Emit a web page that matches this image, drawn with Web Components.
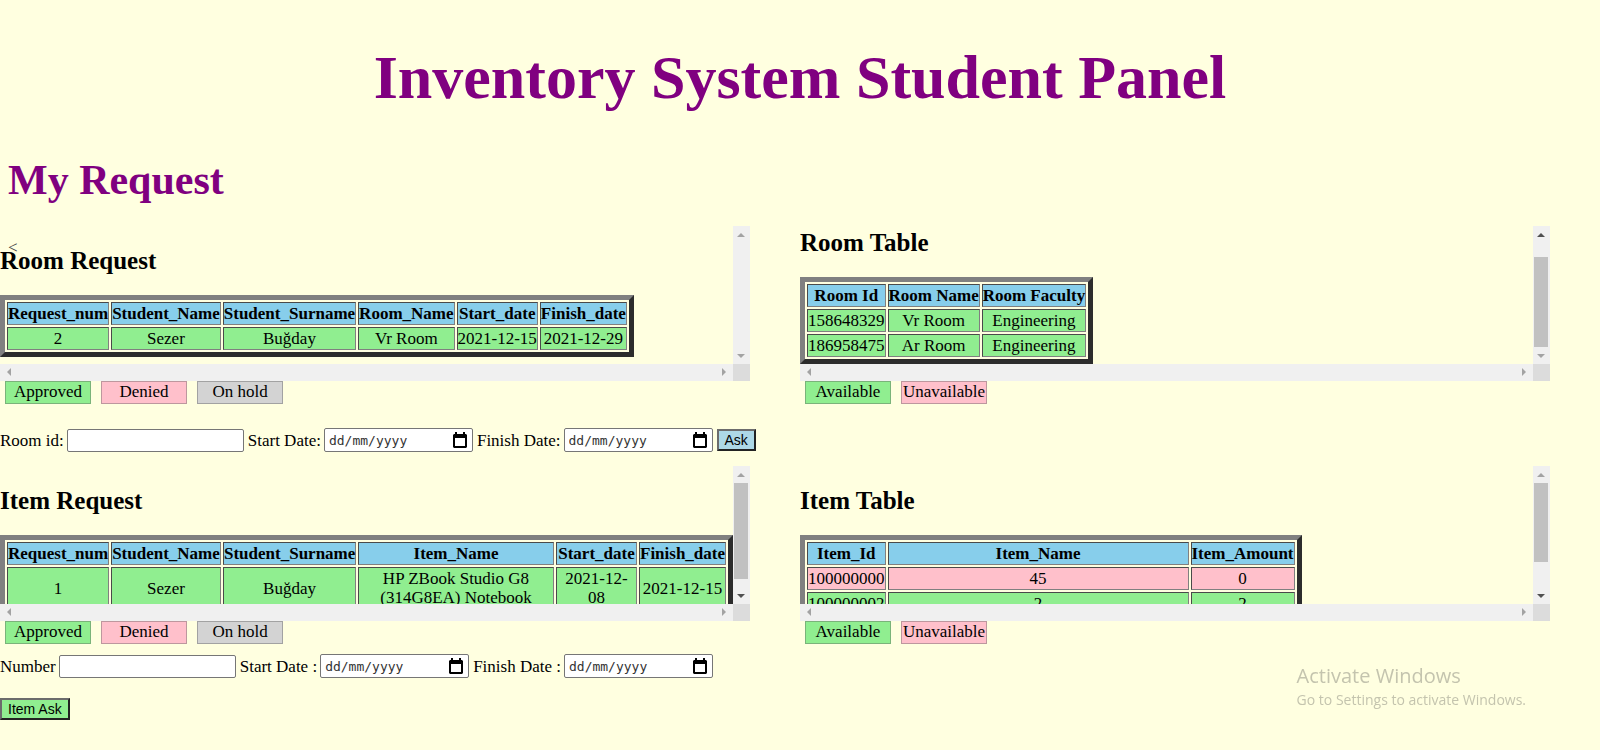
<!DOCTYPE html>
<html lang="en">
<head>
<meta charset="utf-8">
<title>Inventory System Student Panel</title>
<style>
  body {
    margin: 0;
    background: #ffffe0;
    color: #000;
    font-family: "Liberation Serif", "Times New Roman", serif;
    font-size: 17px;
    line-height: 19px;
  }
</style>
</head>
<body>
<student-panel></student-panel>

<script>
const TABLES = {
  roomRequests: {
    columns: ["Request_num", "Student_Name", "Student_Surname", "Room_Name", "Start_date", "Finish_date"],
    rows: [["ok", "2", "Sezer", "Buğday", "Vr Room", "2021-12-15", "2021-12-29"]]
  },
  rooms: {
    columns: ["Room Id", "Room Name", "Room Faculty"],
    rows: [
      ["ok", "158648329", "Vr Room", "Engineering"],
      ["ok", "186958475", "Ar Room", "Engineering"]
    ]
  },
  itemRequests: {
    fill: true,
    columns: ["Request_num", "Student_Name", "Student_Surname", "Item_Name", "Start_date", "Finish_date"],
    widths: [102, 110, 133, 0, 81, 87],
    rows: [["ok", "1", "Sezer", "Buğday", "HP ZBook Studio G8 (314G8EA) Notebook", "2021-12-<br>08", "2021-12-15"]]
  },
  items: {
    columns: ["Item_Id", "Item_Name", "Item_Amount"],
    widths: [0, 301, 0],
    rows: [
      ["no", "100000000", "45", "0"],
      ["ok", "100000002", "2", "2"]
    ]
  }
};

class DataTable extends HTMLElement {
  connectedCallback() {
    const t = TABLES[this.getAttribute("source")];
    const cols = (t.widths || []).map(w => w ? `<col style="width:${w}px">` : "<col>").join("");
    const head = t.columns.map(c => `<th scope="col">${c}</th>`).join("");
    const body = t.rows.map(([state, ...cells]) =>
      `<tr class="${state}">${cells.map(c => `<td>${c}</td>`).join("")}</tr>`).join("");
    this.attachShadow({ mode: "open" }).innerHTML = `
      <style>
        :host { display: block; }
        table {
          border: 5px solid;
          border-color: #808080 #2c2c2c #2c2c2c #808080;
          border-spacing: 2px;
          text-align: center;
        }
        table.fill { width: 100%; table-layout: fixed; }
        th, td {
          box-sizing: border-box;
          border: 1px solid;
          border-color: #4a4a4a #808080 #808080 #4a4a4a;
          padding: 1px 0;
        }
        th { background: skyblue; }
        .ok { background: lightgreen; }
        .no { background: pink; }
      </style>
      <table class="${t.fill ? "fill" : ""}">
        <colgroup>${cols}</colgroup>
        <thead><tr>${head}</tr></thead>
        <tbody>${body}</tbody>
      </table>`;
  }
}
customElements.define("data-table", DataTable);

class ScrollPanel extends HTMLElement {
  connectedCallback() {
    const on = "#505050", off = "#a3a3a3";
    const up = this.hasAttribute("can-up") ? on : off;
    const down = this.hasAttribute("can-down") ? on : off;
    const thumb = this.getAttribute("thumb");
    const arrow = (d, fill) => `<svg width="17" height="17" viewBox="0 0 17 17"><path d="${d}" fill="${fill}"/></svg>`;
    this.attachShadow({ mode: "open" }).innerHTML = `
      <style>
        :host {
          display: grid;
          grid-template-columns: minmax(0, 1fr) 17px;
          grid-template-rows: 138px 17px;
        }
        .view { overflow: hidden; }
        h2 { margin: 21px 0 20px; font-size: 25px; line-height: 28px; }
        svg { display: block; flex: none; }
        .v, .h { display: flex; background: #f0f0f0; }
        .v { flex-direction: column; }
        .h { justify-content: space-between; }
        .track { flex: 1; display: flex; flex-direction: column; padding: 0 2px 0 1px; }
        .track.end { justify-content: flex-end; }
        .thumb { background: #c1c1c1; }
        .corner { background: #dcdcdc; }
      </style>
      <div class="view"><h2>${this.getAttribute("heading")}</h2><slot></slot></div>
      <div class="v" aria-hidden="true">
        ${arrow("M4 11 8 7 12 11Z", up)}
        <div class="track ${this.hasAttribute("can-up") ? "end" : ""}">
          ${thumb ? `<div class="thumb" style="height:${thumb}%"></div>` : ""}
        </div>
        ${arrow("M4 7 8 11 12 7Z", down)}
      </div>
      <div class="h" aria-hidden="true">
        ${arrow("M11 4 7 8 11 12Z", off)}
        ${arrow("M6 4 10 8 6 12Z", off)}
      </div>
      <div class="corner"></div>`;
    if (this.hasAttribute("can-up")) {
      requestAnimationFrame(() => this.toEnd());
      this.toEnd();
    }
  }
  toEnd() {
    const view = this.shadowRoot.querySelector(".view");
    view.scrollTop = view.scrollHeight;
  }
}
customElements.define("scroll-panel", ScrollPanel);

class StatusLegend extends HTMLElement {
  connectedCallback() {
    const tone = { Approved: "lightgreen", Available: "lightgreen", Denied: "pink", Unavailable: "pink", "On hold": "lightgray" };
    const chips = this.getAttribute("items").split(",")
      .map(n => `<span style="background:${tone[n]}">${n}</span>`).join("");
    this.attachShadow({ mode: "open" }).innerHTML = `
      <style>
        :host { display: flex; gap: 10px; padding-left: 5px; }
        span {
          box-sizing: border-box;
          width: 86px;
          height: 23px;
          border: 1px solid rgba(90, 90, 90, .4);
          text-align: center;
        }
      </style>${chips}`;
  }
}
customElements.define("status-legend", StatusLegend);

const FIELD_STYLE = `
  :host { display: flex; align-items: center; gap: 3px; white-space: nowrap; }
  input {
    box-sizing: border-box;
    margin: 0;
    border: 1px solid #767676;
    border-radius: 2px;
    background: #fff;
  }`;

class TextField extends HTMLElement {
  connectedCallback() {
    this.attachShadow({ mode: "open" }).innerHTML = `
      <style>${FIELD_STYLE}
        input { width: 177px; height: 23px; padding: 1px 2px; font: 14px/18px "Liberation Sans", Arial, sans-serif; }
      </style>
      <label for="field">${this.getAttribute("label")}</label><input id="field" type="text">`;
  }
}
customElements.define("text-field", TextField);

class DateField extends HTMLElement {
  connectedCallback() {
    this.attachShadow({ mode: "open" }).innerHTML = `
      <style>${FIELD_STYLE}
        .box { display: grid; align-items: center; }
        .box > * { grid-area: 1 / 1; }
        input {
          width: 149px; height: 24px; padding: 1px 24px 1px 4px;
          font: 13px/18px "DejaVu Sans Mono", Consolas, monospace;
        }
        input::placeholder { color: #333; opacity: 1; }
        button { justify-self: end; margin: 0 6px 0 0; padding: 0; border: 0; background: none; }
        svg { display: block; }
      </style>
      <label for="field">${this.getAttribute("label")}</label>
      <div class="box">
        <input id="field" type="text" inputmode="numeric" placeholder="dd/mm/yyyy">
        <button type="button" aria-label="Open calendar">
          <svg width="14" height="16" viewBox="0 0 14 16">
            <path d="M2 0h2v2h6v-2h2v2h1l1 1v12l-1 1h-12l-1-1v-12l1-1h1zM2 6v8h10v-8z" fill="#000" fill-rule="evenodd"/>
          </svg>
        </button>
      </div>`;
  }
}
customElements.define("date-field", DateField);

class AskButton extends HTMLElement {
  connectedCallback() {
    this.attachShadow({ mode: "open" }).innerHTML = `
      <style>
        :host { display: block; }
        button {
          display: block;
          margin: 0;
          height: 22px;
          padding: 0 6px;
          border: 2px solid;
          border-color: #6c6c6c #222 #222 #6c6c6c;
          background: var(--tone);
          color: #000;
          font: 14px/18px "Liberation Sans", Arial, sans-serif;
        }
      </style>
      <button type="button"><slot></slot></button>`;
  }
}
customElements.define("ask-button", AskButton);

class WindowsNotice extends HTMLElement {
  connectedCallback() {
    this.attachShadow({ mode: "open" }).innerHTML = `
      <style>
        :host {
          position: fixed;
          right: 74px;
          bottom: 39px;
          color: #c4c4ae;
          font-family: "Open Sans", "Segoe UI", sans-serif;
          pointer-events: none;
        }
        p { margin: 0; white-space: nowrap; }
        .title { font-size: 20px; line-height: 26px; }
        .hint { font-size: 14px; line-height: 22px; }
      </style>
      <p class="title">Activate Windows</p>
      <p class="hint">Go to Settings to activate Windows.</p>`;
  }
}
customElements.define("windows-notice", WindowsNotice);

class StudentPanel extends HTMLElement {
  connectedCallback() {
    this.attachShadow({ mode: "open" }).innerHTML = `
      <style>
        :host { display: block; }
        h1 { margin: 0; color: purple; }
        .main { padding: 42px 0 44px; font-size: 62px; line-height: 70px; text-align: center; }
        .sub { padding: 0 8px 22px; font-size: 42px; line-height: 48px; }
        .grid { position: relative; display: grid; grid-template-columns: 1fr 1fr; }
        .stray { position: absolute; left: 8px; top: 12px; color: #444; }
        section { min-width: 0; }
        scroll-panel { margin-right: 50px; }
        form { display: flex; flex-wrap: wrap; align-items: center; gap: 20px 4px; }
        .room { padding: 24px 0 14px; }
        .item { padding: 10px 0 20px; }
        .item ask-button { flex-basis: 100%; }
      </style>
      <h1 class="main">Inventory System Student Panel</h1>
      <h1 class="sub">My Request</h1>
      <main class="grid">
        <span class="stray">&lt;</span>
        <section>
          <scroll-panel heading="Room Request"><data-table source="roomRequests"></data-table></scroll-panel>
          <status-legend items="Approved,Denied,On hold"></status-legend>
          <form class="room">
            <text-field label="Room id:"></text-field>
            <date-field label="Start Date:"></date-field>
            <date-field label="Finish Date:"></date-field>
            <ask-button style="--tone: lightblue">Ask</ask-button>
          </form>
        </section>
        <section>
          <scroll-panel heading="Room Table" can-up thumb="87"><data-table source="rooms"></data-table></scroll-panel>
          <status-legend items="Available,Unavailable"></status-legend>
        </section>
        <section>
          <scroll-panel heading="Item Request" can-down thumb="92"><data-table source="itemRequests"></data-table></scroll-panel>
          <status-legend items="Approved,Denied,On hold"></status-legend>
          <form class="item">
            <text-field label="Number"></text-field>
            <date-field label="Start Date :"></date-field>
            <date-field label="Finish Date :"></date-field>
            <ask-button style="--tone: lightgreen">Item Ask</ask-button>
          </form>
        </section>
        <section>
          <scroll-panel heading="Item Table" can-down thumb="76"><data-table source="items"></data-table></scroll-panel>
          <status-legend items="Available,Unavailable"></status-legend>
        </section>
      </main>
      <windows-notice></windows-notice>`;
  }
}
customElements.define("student-panel", StudentPanel);
</script>
</body>
</html>
